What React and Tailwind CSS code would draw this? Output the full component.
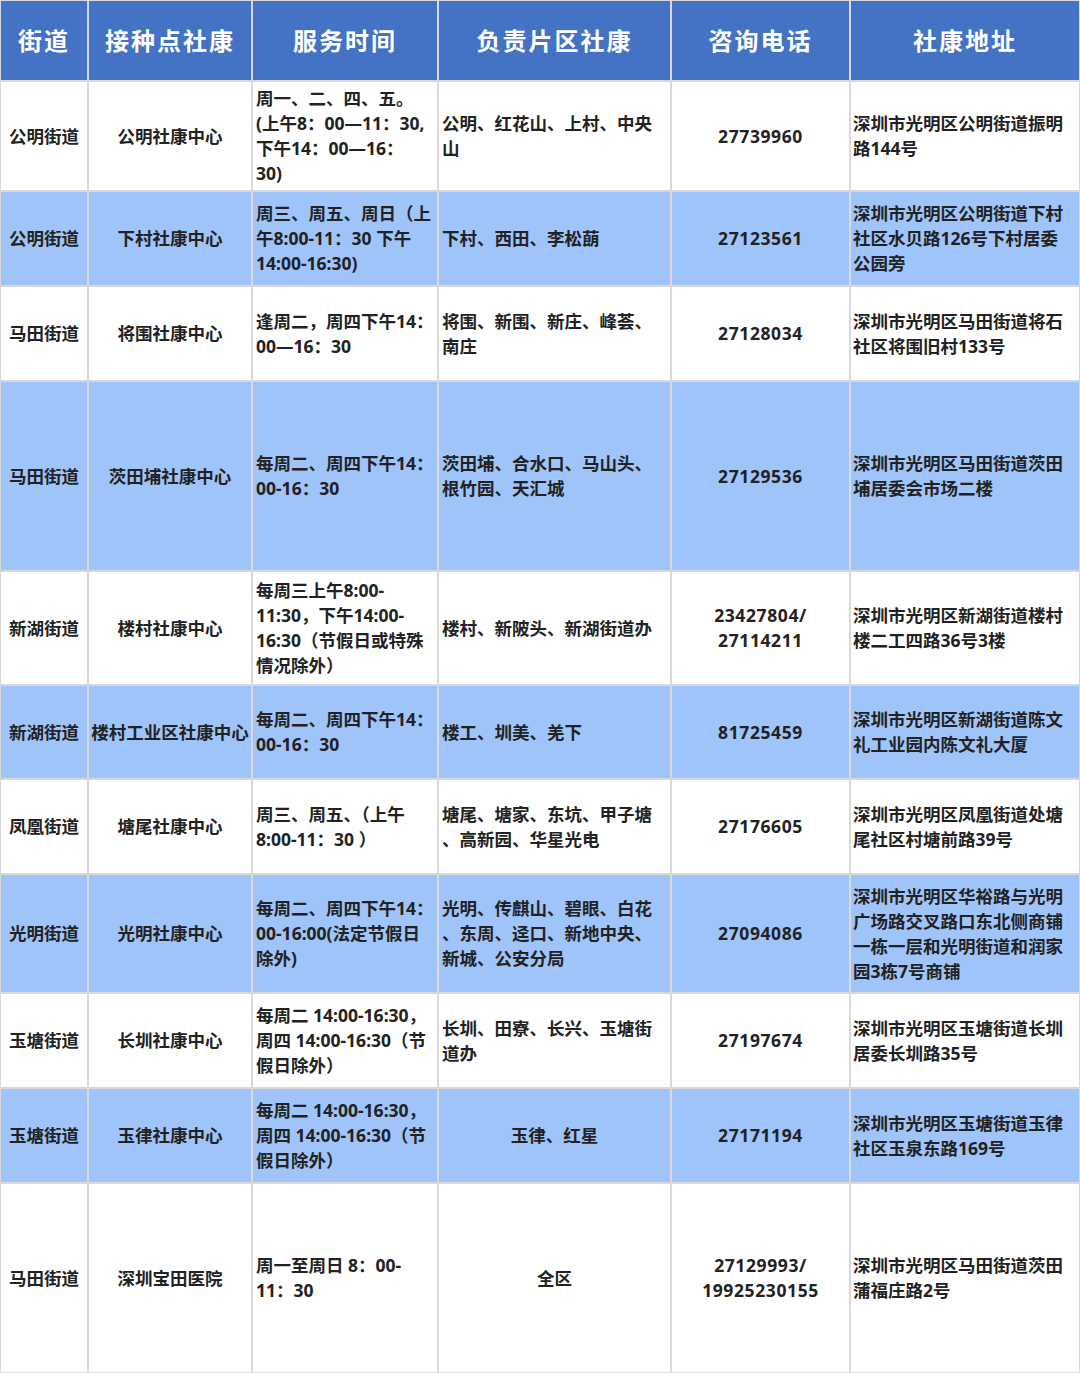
import React from 'react';

const BLUE = 'bg-[#9fc4f9]';
const WHITE = 'bg-white';

const HEAD = ['街道', '接种点社康', '服务时间', '负责片区社康', '咨询电话', '社康地址'];

const ROWS = [
  {
    bg: WHITE,
    cells: [
      ['公明街道'], ['公明社康中心'],
      ['周一、二、四、五。', '(上午8：00—11：30,', '下午14：00—16：', '30)'],
      ['公明、红花山、上村、中央', '山'],
      ['27739960'],
      ['深圳市光明区公明街道振明', '路144号'],
    ],
  },
  {
    bg: BLUE,
    cells: [
      ['公明街道'], ['下村社康中心'],
      ['周三、周五、周日（上', '午8:00-11：30 下午', '14:00-16:30)'],
      ['下村、西田、李松蓢'],
      ['27123561'],
      ['深圳市光明区公明街道下村', '社区水贝路126号下村居委', '公园旁'],
    ],
  },
  {
    bg: WHITE,
    cells: [
      ['马田街道'], ['将围社康中心'],
      ['逢周二，周四下午14：', '00—16：30'],
      ['将围、新围、新庄、峰荟、', '南庄'],
      ['27128034'],
      ['深圳市光明区马田街道将石', '社区将围旧村133号'],
    ],
  },
  {
    bg: BLUE,
    cells: [
      ['马田街道'], ['茨田埔社康中心'],
      ['每周二、周四下午14：', '00-16：30'],
      ['茨田埔、合水口、马山头、', '根竹园、天汇城'],
      ['27129536'],
      ['深圳市光明区马田街道茨田', '埔居委会市场二楼'],
    ],
  },
  {
    bg: WHITE,
    cells: [
      ['新湖街道'], ['楼村社康中心'],
      ['每周三上午8:00-', '11:30，下午14:00-', '16:30（节假日或特殊', '情况除外）'],
      ['楼村、新陂头、新湖街道办'],
      ['23427804/', '27114211'],
      ['深圳市光明区新湖街道楼村', '楼二工四路36号3楼'],
    ],
  },
  {
    bg: BLUE,
    cells: [
      ['新湖街道'], ['楼村工业区社康中心'],
      ['每周二、周四下午14：', '00-16：30'],
      ['楼工、圳美、羌下'],
      ['81725459'],
      ['深圳市光明区新湖街道陈文', '礼工业园内陈文礼大厦'],
    ],
  },
  {
    bg: WHITE,
    cells: [
      ['凤凰街道'], ['塘尾社康中心'],
      ['周三、周五、（上午', '8:00-11：30 ）'],
      ['塘尾、塘家、东坑、甲子塘', '、高新园、华星光电'],
      ['27176605'],
      ['深圳市光明区凤凰街道处塘', '尾社区村塘前路39号'],
    ],
  },
  {
    bg: BLUE,
    cells: [
      ['光明街道'], ['光明社康中心'],
      ['每周二、周四下午14：', '00-16:00(法定节假日', '除外)'],
      ['光明、传麒山、碧眼、白花', '、东周、迳口、新地中央、', '新城、公安分局'],
      ['27094086'],
      ['深圳市光明区华裕路与光明', '广场路交叉路口东北侧商铺', '一栋一层和光明街道和润家', '园3栋7号商铺'],
    ],
  },
  {
    bg: WHITE,
    cells: [
      ['玉塘街道'], ['长圳社康中心'],
      ['每周二 14:00-16:30，', '周四 14:00-16:30（节', '假日除外）'],
      ['长圳、田寮、长兴、玉塘街', '道办'],
      ['27197674'],
      ['深圳市光明区玉塘街道长圳', '居委长圳路35号'],
    ],
  },
  {
    bg: BLUE,
    center4: true,
    cells: [
      ['玉塘街道'], ['玉律社康中心'],
      ['每周二 14:00-16:30，', '周四 14:00-16:30（节', '假日除外）'],
      ['玉律、红星'],
      ['27171194'],
      ['深圳市光明区玉塘街道玉律', '社区玉泉东路169号'],
    ],
  },
  {
    bg: WHITE,
    center4: true,
    cells: [
      ['马田街道'], ['深圳宝田医院'],
      ['周一至周日 8：00-', '11：30'],
      ['全区'],
      ['27129993/', '19925230155'],
      ['深圳市光明区马田街道茨田', '蒲福庄路2号'],
    ],
  },
];

function Cell({ lines, bg, align }) {
  return (
    <div className={`${bg} flex flex-col justify-center ${align} overflow-hidden`}>
      {lines.map((l, i) => (
        <div key={i} className="whitespace-nowrap leading-[25px]">{l}</div>
      ))}
    </div>
  );
}

export default function App() {
  return (
    <div className="w-[1080px] h-[1373px] bg-[#d9d9d9] p-[1px] grid grid-cols-[86px_162px_184px_231px_177px_228px] grid-rows-[79px_108px_93px_93px_188px_112px_92px_93px_117px_93px_93px_188px] gap-[2px] font-['Noto_Sans','Noto_Sans_CJK_SC',sans-serif] font-bold text-[17.5px] text-[#222222]">
      {HEAD.map((h) => (
        <div key={h} className="bg-[#4472c4] flex items-center justify-center text-white text-[24px] tracking-[2px]">
          {h}
        </div>
      ))}
      {ROWS.map((r, ri) =>
        r.cells.map((lines, ci) => {
          let align = 'items-start text-left px-[3px]';
          if (ci === 0 || ci === 1) align = 'items-center text-center';
          // phone numbers are set a touch wider in the original
          if (ci === 4) align = 'items-center text-center tracking-[0.6px]';
          if (ci === 3 && r.center4) align = 'items-center text-center';
          if (ci === 5) align = 'items-start text-left pl-[2px]';
          return <Cell key={`${ri}-${ci}`} lines={lines} bg={r.bg} align={align} />;
        })
      )}
    </div>
  );
}
